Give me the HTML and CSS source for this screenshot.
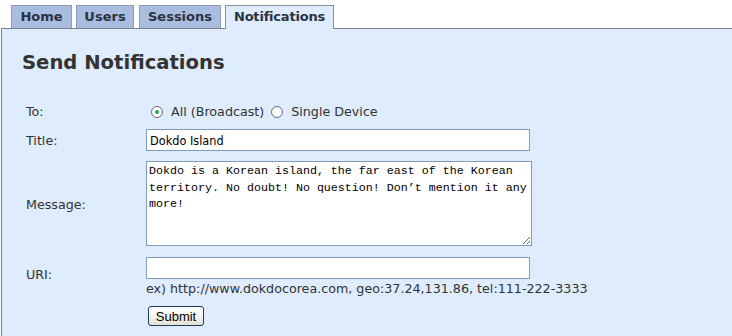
FILE: index.html
```html
<!DOCTYPE html>
<html>
<head>
<meta charset="utf-8">
<link rel="stylesheet" href="styles.css">
</head>
<body>
<nav class="tabs">
  <a class="tab tab-home">Home</a>
  <a class="tab tab-users">Users</a>
  <a class="tab tab-sessions">Sessions</a>
  <a class="tab tab-notif active">Notifications</a>
</nav>
<main class="panel">
  <h1 class="title">Send Notifications</h1>
  <form class="form">
    <div class="label row-to">To:</div>
    <div class="field field-to">
      <span class="radio checked"></span><span class="opt">All (Broadcast)</span>
      <span class="radio"></span><span class="opt">Single Device</span>
    </div>

    <label class="label">Title:</label>
    <div class="field field-title"><input class="text" type="text" value="Dokdo Island"></div>

    <label class="label">Message:</label>
    <div class="field field-msg"><textarea class="area">Dokdo is a Korean island, the far east of the Korean territory. No doubt! No question! Don’t mention it any more!</textarea></div>

    <label class="label label-uri">URI:</label>
    <div class="field field-uri">
      <input class="text" type="text" value="">
      <div class="hint">ex) http://www.dokdocorea.com, geo:37.24,131.86, tel:111-222-3333</div>
    </div>

    <div class="label"></div>
    <div class="field field-submit"><button class="submit" type="button">Submit</button></div>
  </form>
</main>
</body>
</html>
```
FILE: styles.css
```css
html, body {
  margin: 0;
  padding: 0;
  background: #ffffff;
  height: 336px;
  overflow: hidden;
}
body {
  font-family: "DejaVu Sans", Verdana, sans-serif;
  color: #333333;
}
.tabs {
  display: flex;
  align-items: flex-start;
  height: 23px;
  padding: 5px 0 0 11px;
  position: relative;
  z-index: 1;
}
.tab {
  box-sizing: border-box;
  height: 23px;
  padding: 0;
  margin-right: 4px;
  border: 1px solid #8e9db5;
  border-bottom: none;
  background: #a9bde0;
  font-size: 13px;
  font-weight: bold;
  line-height: 22px;
  text-align: center;
  white-space: nowrap;
  color: #2a3340;
}
.tab-home { width: 61px; }
.tab-users { width: 58px; margin-right: 5px; }
.tab-sessions { width: 82px; }
.tab-notif { width: 109px; letter-spacing: -0.2px; }
.tab.active {
  height: 24px;
  background: #deecfd;
  border-color: #8a8f96;
}
.panel {
  box-sizing: border-box;
  margin-left: 1px;
  border-top: 1px solid #7c8085;
  border-left: 1px solid #7c8085;
  background: #deecfd;
  height: 308px;
  padding: 22px 0 0 20px;
}
.title {
  margin: 0;
  font-size: 19.6px;
  line-height: 24px;
  font-weight: bold;
  color: #333333;
}
.form {
  margin-top: 24px;
  display: grid;
  grid-template-columns: 124px 1fr;
  align-items: center;
  font-size: 12.7px;
}
.label {
  padding-left: 4px;
  color: #333333;
}
.row-to {
  height: 25px;
  line-height: 25px;
}
.field-to {
  display: flex;
  align-items: center;
  height: 25px;
}
.radio {
  box-sizing: border-box;
  width: 12px;
  height: 12px;
  border: 1px solid #5b6e82;
  border-radius: 50%;
  background: #ffffff;
  margin: 0 8px 0 5px;
  display: flex;
  align-items: center;
  justify-content: center;
}
.radio.checked::after {
  content: "";
  width: 4px;
  height: 4px;
  border-radius: 50%;
  background: #2fa83a;
}
.opt {
  margin-right: 2px;
}
.field-title {
  padding: 5px 0;
}
.text {
  box-sizing: border-box;
  display: block;
  width: 384px;
  height: 22px;
  margin: 0;
  padding: 1px 3px;
  border: 1px solid #7f9db9;
  background: #ffffff;
  font-family: "DejaVu Sans Condensed", "DejaVu Sans", sans-serif;
  font-stretch: condensed;
  font-size: 12.6px;
  color: #000000;
  outline: none;
}
.field-msg {
  padding: 5px 0 6px;
}
.area {
  box-sizing: border-box;
  display: block;
  width: 386px;
  height: 85px;
  margin: 0;
  padding: 1px 2px;
  border: 1px solid #7f9db9;
  background: #ffffff;
  font-family: "Liberation Mono", monospace;
  font-size: 11.67px;
  line-height: 16.5px;
  color: #000000;
  outline: none;
}
.field-uri {
  padding: 5px 0 5px;
}
.label-uri {
  padding-bottom: 6px;
}
.hint {
  margin-top: 1px;
  line-height: 17px;
  color: #333333;
}
.field-submit {
  padding: 4px 0;
}
.submit {
  box-sizing: border-box;
  margin: 0 0 0 2px;
  width: 56px;
  height: 20px;
  padding: 0;
  border: 1px solid #1d3a5c;
  border-radius: 3px;
  background: linear-gradient(#ffffff, #f2f1ea 60%, #e3e0d2);
  font-family: "Liberation Sans", Arial, sans-serif;
  font-size: 13px;
  color: #000000;
}
```
